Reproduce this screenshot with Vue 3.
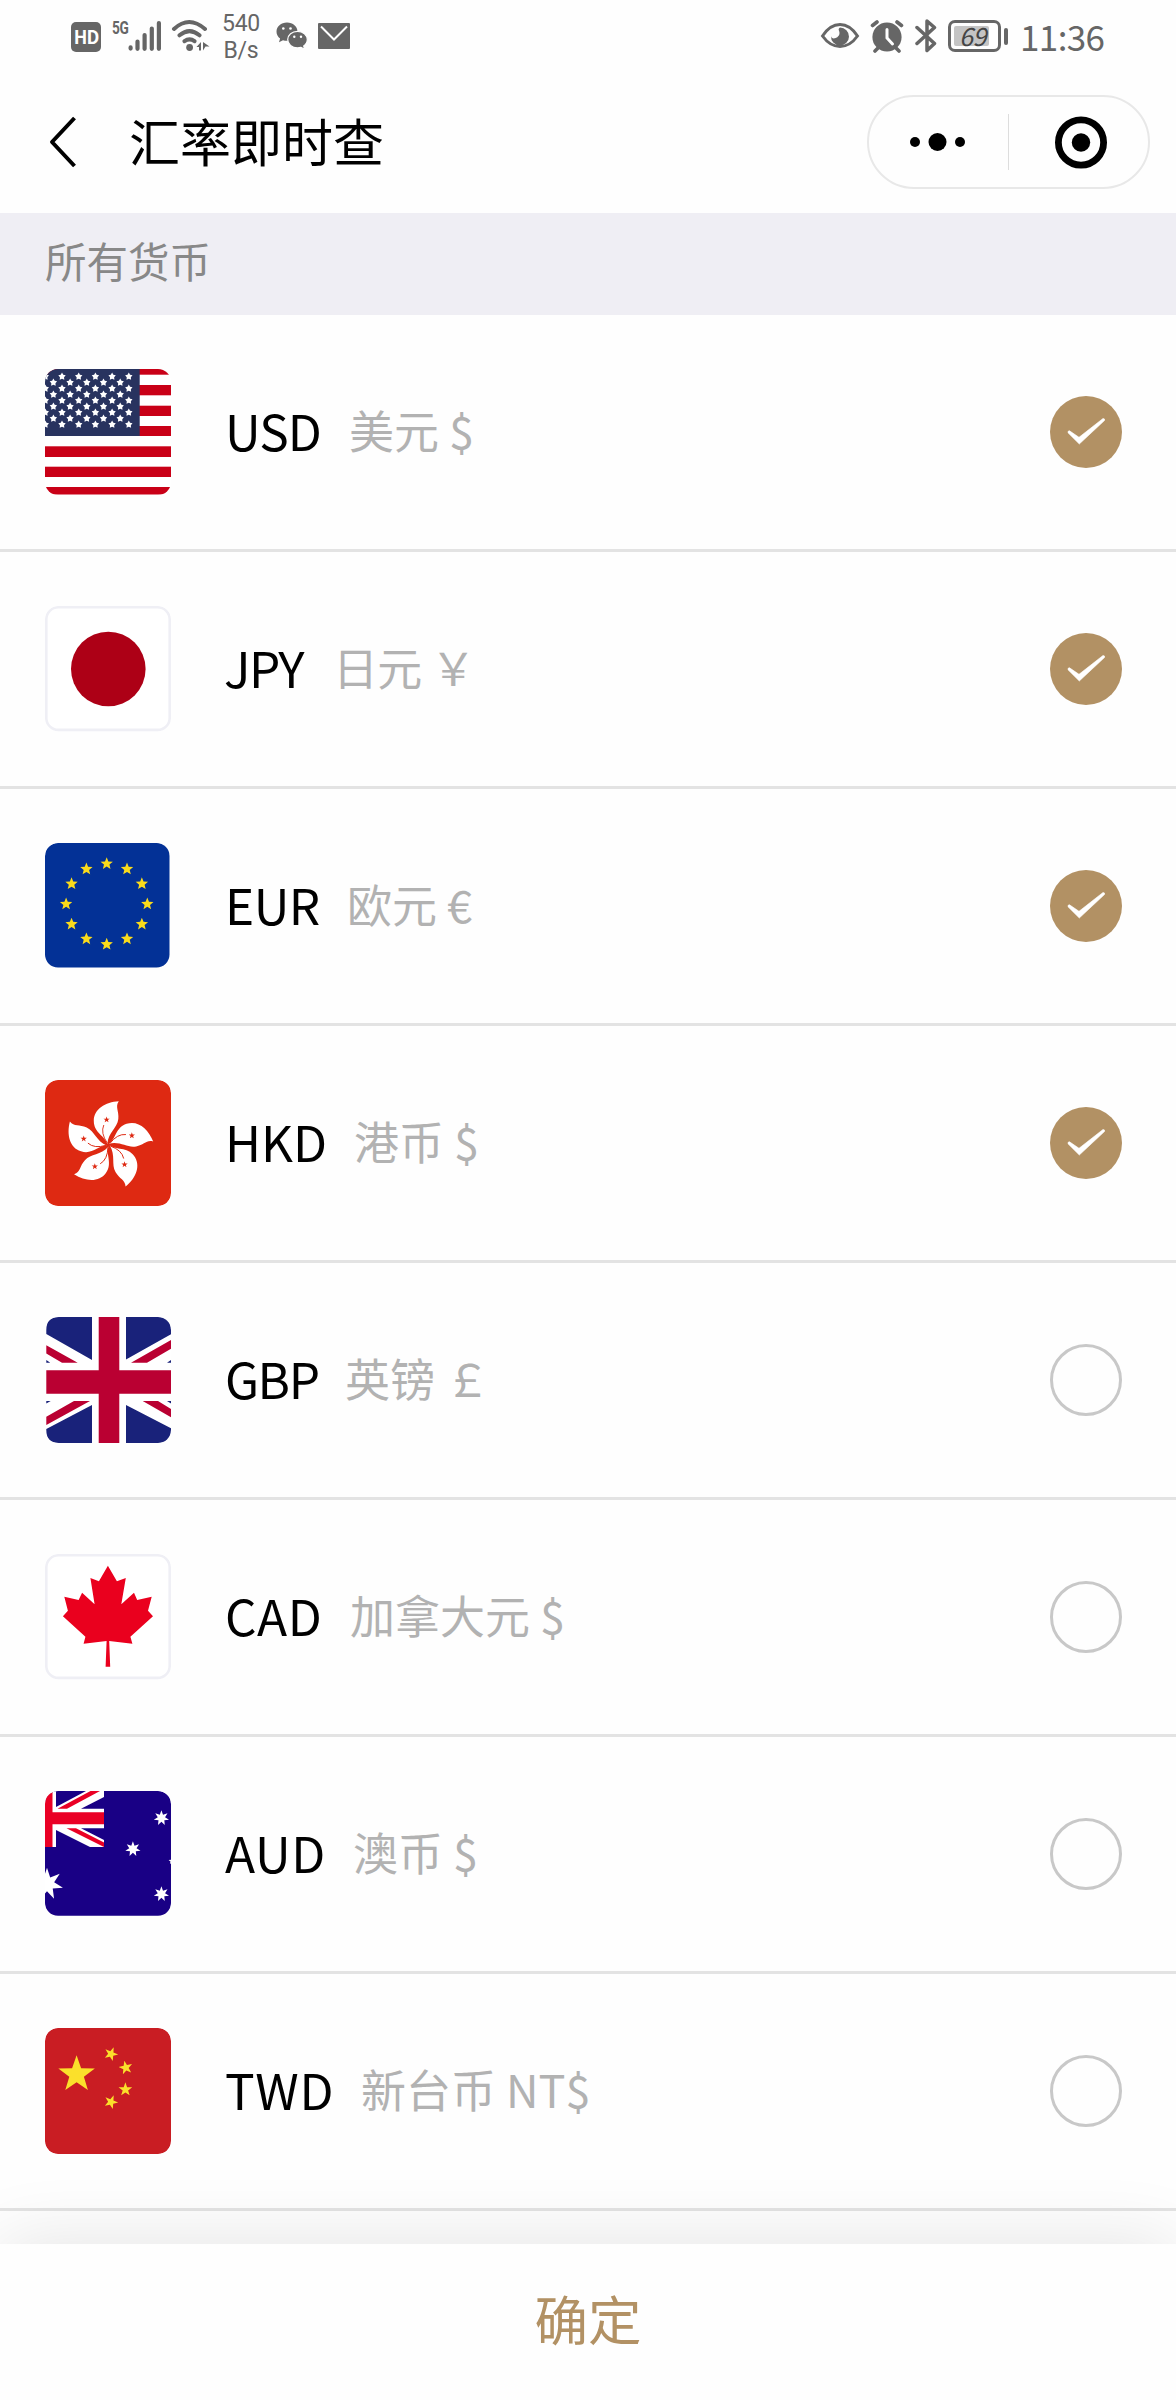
<script setup>
import { ref } from 'vue'

const currencies = ref([
  { code: 'USD', label: '美元 $', checked: true },
  { code: 'JPY', label: '日元 ￥', checked: true },
  { code: 'EUR', label: '欧元 €', checked: true },
  { code: 'HKD', label: '港币 $', checked: true },
  { code: 'GBP', label: '英镑 ￡', checked: false },
  { code: 'CAD', label: '加拿大元 $', checked: false },
  { code: 'AUD', label: '澳币 $', checked: false },
  { code: 'TWD', label: '新台币 NT$', checked: false },
])

// Builds the points of a regular star polygon.
function star(cx, cy, r, n = 5, inner = 0.4, turn = 0) {
  const pts = []
  for (let i = 0; i < n * 2; i++) {
    const a = ((-90 + turn + (i * 180) / n) * Math.PI) / 180
    const d = i % 2 ? r * inner : r
    pts.push((cx + d * Math.cos(a)).toFixed(2) + ',' + (cy + d * Math.sin(a)).toFixed(2))
  }
  return pts.join(' ')
}

const usStripes = [[0, 5.7], [16, 10.3], [36.7, 10.3], [57, 10], [77.3, 10.7], [97.7, 10.3], [118, 7.5]]
const usStars = []
for (let r = 0; r < 9; r++) {
  const first = r % 2 ? 8.4 : 0.3
  const count = r % 2 ? 5 : 6
  for (let c = 0; c < count; c++) usStars.push(star(first + c * 16.7, 7.5 + r * 6, 3.9, 5, 0.55))
}
const euStars = Array.from({ length: 12 }, (_, i) => {
  const a = (i * Math.PI) / 6
  return star(61.7 + 40.6 * Math.sin(a), 61 - 40.3 * Math.cos(a), 6.5, 5, 0.44)
})
const auStars = [
  star(116.4, 27, 7.8, 7, 0.48),
  star(87.9, 58, 7.8, 7, 0.48),
  star(116.4, 103, 7.8, 7, 0.48),
  star(127, 70, 3.6, 5, 0.45),
  star(2, 93, 16.3, 7, 0.45),
]
const cnStars = [
  star(31.6, 46.5, 19.2),
  star(66, 26, 7.2, 5, 0.4, 22),
  star(80.8, 39.7, 7.2, 5, 0.4, -12),
  star(80.4, 61.5, 7.2, 5, 0.4, 0),
  star(66, 74, 7.2, 5, 0.4, 22),
]
</script>

<template>
  <div class="screen">
    <div class="status">
      <div class="hd">HD</div>
      <div class="cell">
        <span class="gen">5G</span>
        <svg class="bars" width="34" height="32" viewBox="0 0 34 32">
          <g stroke="#666" stroke-width="4.2" stroke-linecap="round">
            <path d="M2.6 27.4v1.2M9.5 21.5v7.3M16.6 15v13.8M23.8 8.5v20.3M30.9 3v25.8" />
          </g>
        </svg>
      </div>
      <svg class="wifi" width="40" height="34" viewBox="0 0 40 34">
        <g fill="none" stroke="#666" stroke-width="4" stroke-linecap="round">
          <path d="M3 10Q18 -4 34 10M8.5 16.3Q18.500 8 28.500 16.300M13.500 22.200Q18.500 18.500 23.500 22.200" />
        </g>
        <circle cx="18.600" cy="28.500" r="3.400" fill="#666" />
        <path d="M25.500 28L30 23v8.500h-2v-3.500zM32 23l6.500 4.500h-4l-2.500 4z" fill="#666" />
      </svg>
      <div class="speed"><span>540</span><span>B/s</span></div>
      <svg class="wechat" width="32" height="28" viewBox="0 0 32 28">
        <path d="M11 .5C5 .5.500 4.500.500 9.700c0 2.800 1.400 5.200 3.600 6.900L3 20.300l4-2.100c1.200.4 2.600.6 4 .6C17 18.800 21.500 14.800 21.500 9.700S17 .5 11 .5z" fill="#666" />
        <path d="M21.500 9.300c-5.500 0-9.800 3.700-9.800 8.300s4.300 8.300 9.800 8.300c1.200 0 2.400-.2 3.500-.5l3.700 2-1-3.400c2.200-1.500 3.600-3.800 3.600-6.400 0-4.600-4.300-8.300-9.800-8.300z" fill="#666" stroke="#fff" stroke-width="1.200" />
        <g fill="#fff"><circle cx="7.300" cy="6.500" r="1.300" /><circle cx="14.500" cy="6.500" r="1.300" /><circle cx="18.300" cy="14.800" r="1.200" /><circle cx="25" cy="14.800" r="1.200" /></g>
      </svg>
      <svg class="mail" width="32" height="26" viewBox="0 0 32 26">
        <rect width="32" height="26" rx="1" fill="#666" />
        <path d="M3 3.500L16 16.500L29 3.500" fill="none" stroke="#fff" stroke-width="2" />
      </svg>
      <svg class="eye" width="40" height="28" viewBox="0 0 40 28">
        <path d="M2.500 14Q10 2.500 20 2.500T37.500 14Q30 24.500 20 24.500T2.500 14z" fill="none" stroke="#666" stroke-width="3" />
        <path d="M20 5.500a9 9 0 1 1-9 8.500c.3 2 2 2.800 4 2.300 3.500-1 5.500-4 4-7.500-.6-1.500-.5-2.500 1-3.300z" fill="#666" />
      </svg>
      <svg class="alarm" width="34" height="34" viewBox="0 0 34 34">
        <circle cx="17" cy="18" r="14.600" fill="#666" />
        <path d="M2.500 6.500L7 3M31.500 6.500L27 3M5 32l4-4M29 32l-4-4" stroke="#666" stroke-width="3.600" stroke-linecap="round" />
        <path d="M17 10.500v8.500l5.500 6" fill="none" stroke="#fff" stroke-width="3" stroke-linecap="round" />
      </svg>
      <svg class="bt" width="22" height="36" viewBox="0 0 22 36">
        <path d="M2 9.500L19.500 25.500L12 32.500V3L19.500 9.500L2 25.500" fill="none" stroke="#666" stroke-width="3.500" stroke-linejoin="round" stroke-linecap="round" />
      </svg>
      <div class="battery"><span>69</span></div>
      <div class="nub"></div>
      <div class="time">11:36</div>
    </div>

    <header class="nav">
      <svg class="back" width="30" height="54" viewBox="0 0 30 54">
        <path d="M26.500 3L4 27L26.500 51" fill="none" stroke="#000" stroke-width="4" stroke-linejoin="round" />
      </svg>
      <h1>汇率即时查</h1>
      <div class="capsule">
        <svg width="139" height="90" viewBox="0 0 139 90">
          <circle cx="46" cy="45" r="5" /><circle cx="68.500" cy="45" r="9" /><circle cx="91" cy="45" r="5" />
        </svg>
        <i></i>
        <svg width="139" height="90" viewBox="0 0 139 90">
          <circle cx="72" cy="45.500" r="22.600" fill="none" stroke="#000" stroke-width="6.800" /><circle cx="72" cy="45.500" r="9.200" />
        </svg>
      </div>
    </header>

    <div class="section">所有货币</div>

    <main>
      <div v-for="c in currencies" :key="c.code" class="row" :class="c.code.toLowerCase()">
        <div class="flag">
          <svg width="126" height="126" viewBox="0 0 126 126">
            <g v-if="c.code === 'USD'">
              <rect width="126" height="126" fill="#fff" />
              <rect v-for="s in usStripes" :key="s[0]" x="0" :y="s[0]" width="126" :height="s[1]" fill="#c90017" />
              <rect width="94.700" height="67" fill="#28335f" />
              <polygon v-for="(p, i) in usStars" :key="i" :points="p" fill="#fff" />
            </g>
            <g v-else-if="c.code === 'JPY'">
              <rect x="1.300" y="1.300" width="123.400" height="122.600" rx="12" fill="#fff" stroke="#efeff5" stroke-width="2.600" />
              <circle cx="63.300" cy="63" r="37.300" fill="#ad0016" />
            </g>
            <g v-else-if="c.code === 'EUR'">
              <rect width="124.500" height="124.500" rx="13" fill="#033196" />
              <polygon v-for="(p, i) in euStars" :key="i" :points="p" fill="#fadb1b" />
            </g>
            <g v-else-if="c.code === 'HKD'">
              <rect width="126" height="126" rx="13" fill="#de2912" />
              <g transform="translate(63.300 65)">
                <g v-for="n in 5" :key="n" :transform="`rotate(${(n - 1) * 72})`">
                  <path d="M-1 -1C-3 -9 -14.500 -12 -14.500 -24C-14.500 -36 -3 -43 10.500 -43.800C6.500 -38 11 -34 10 -26C9 -17 0 -13 -1 -1z" fill="#fff" />
                  <polygon :points="star(-1.700, -25.300, 3.300)" fill="#de2912" />
                  <path d="M-1 -2Q-8 -12 -4.500 -20" fill="none" stroke="#de2912" stroke-width=".9" />
                </g>
              </g>
            </g>
            <g v-else-if="c.code === 'GBP'">
              <rect x="1.300" width="124.700" height="126" rx="13" fill="#fff" />
              <path d="M1.300 17V13Q1.300 0 14 0H47V43zM81 0H113Q126 0 126 13V17.300L81 42.500zM1.300 112L47 88V126H14Q1.300 126 1.300 113zM81 88L126 111.300V113Q126 126 113 126H81zM1.300 43l4 2.700h-4zM126 43l-4 2.700h4zM1.300 84h4.400l-4.400 2.500zM122 84h4v2.500z" fill="#19227a" />
              <path d="M53.700 0H74.300V53.300H126V76.700H74.300V126H53.700V76.700H1.300V53.300H53.700zM1.300 28.300L32.700 45.700H17L1.300 36.500zM126 23V31.700L102 45.700H86zM1.300 99.700L29 84H45L1.300 108zM97.700 84H113L126 92V100.300z" fill="#ba0032" />
            </g>
            <g v-else-if="c.code === 'CAD'">
              <rect x="1.300" y="1.300" width="123.400" height="122.600" rx="12" fill="#fff" stroke="#efeff5" stroke-width="2.600" />
              <path d="M62.900 11.700L71.900 27.300L80.800 24L76.300 50.300L89 38.700L92.200 46L106.700 42.700L103 56.700L108 62.300L85.400 82.700L87.400 89.700L64.200 87L65.200 112.700H60.600L61.600 87L38.600 89.700L40.400 82.700L17.900 62.300L22.900 56.700L19.300 42.700L33.600 46L37.100 38.700L49.600 50.300L45.400 24L53.900 27.300z" fill="#ea001e" />
            </g>
            <g v-else-if="c.code === 'AUD'">
              <rect width="126" height="124.700" rx="13" fill="#190085" />
              <path d="M3 4Q6 1 11 0V16L41 0H59V6L36 17.700H59V37.300H36L59 49V56H45L11 39V56H0V12Q0 7 3 4z" fill="#fff" />
              <path d="M2 5Q4 2 7.500 1V21.300H59V33.300H7.500V56H0V12Q0 8 2 5zM12.500 17.700L45.500 0H55L22 17.700zM21.500 37.300H31L59 51.500V56z" fill="#ea0025" />
              <polygon v-for="(p, i) in auStars" :key="i" :points="p" fill="#fff" />
            </g>
            <g v-else>
              <rect width="126" height="126" rx="13" fill="#c91d23" />
              <polygon v-for="(p, i) in cnStars" :key="i" :points="p" fill="#fbe02b" />
            </g>
          </svg>
        </div>
        <span class="code">{{ c.code }}</span>
        <span class="label">{{ c.label }}</span>
        <div class="check" :class="{ on: c.checked }" @click="c.checked = !c.checked">
          <svg v-if="c.checked" width="72" height="72" viewBox="0 0 72 72">
            <path d="M19.500 34.800L29 41.300L53 22.500Q55.200 22.500 54.500 24.500L29.300 48L18 36.800Q17.600 34.600 19.500 34.800z" fill="#fff" stroke="#fff" stroke-width=".6" stroke-linejoin="round" />
          </svg>
        </div>
      </div>
    </main>

    <footer class="confirm">确定</footer>
  </div>
</template>

<style>
body { margin: 0; background: #fff; }
</style>

<style scoped>
.screen {
  width: 1176px;
  height: 2400px;
  display: flex;
  flex-direction: column;
  overflow: hidden;
  background: #fefefe;
  color: #000;
  font-family: "Noto Sans CJK SC", sans-serif;
}
.status {
  height: 72px;
  flex: none;
  display: flex;
  align-items: center;
  padding-left: 71px;
  color: #666;
}
.status svg { flex: none; display: block; }
.hd {
  width: 30px; height: 30px; margin-top: 2px; border-radius: 5px;
  background: #666; color: #fff;
  font: 700 18px/28px "Noto Sans CJK SC", sans-serif;
  text-align: center; letter-spacing: -1px;
}
.cell { display: flex; align-items: flex-start; margin-left: 11px; height: 32px; width: 50px; }
.gen { font: 700 19px/15px "Roboto", sans-serif; width: 16px; transform: scaleX(.72); transform-origin: left; letter-spacing: -.5px; }
.wifi { margin-left: 9px; }
.speed {
  width: 42px; margin-left: 9px; padding-top: 2px;
  display: flex; flex-direction: column; align-items: center;
  font: 23px/27px "Roboto", sans-serif; letter-spacing: -.3px;
}
.wechat { margin-left: 14px; }
.mail { margin-left: 10px; }
.eye { margin-left: 470px; }
.alarm { margin-left: 10px; }
.bt { margin-left: 11px; }
.battery {
  box-sizing: border-box; width: 53px; height: 32px; margin-left: 11px;
  border: 3px solid #666; border-radius: 7px; padding: 3px;
}
.battery span {
  display: block; width: 35px; height: 20px; border-radius: 2px; background: #c4c4c4;
  color: #444; font: italic 25px/18px "Noto Sans CJK SC", sans-serif; text-indent: 5px; letter-spacing: -.5px; white-space: nowrap;
}
.nub { width: 4px; height: 17px; border-radius: 2px; margin-left: 3px; background: #666; }
.time { margin-left: 12px; font-size: 35px; line-height: 40px; letter-spacing: -.6px; }
.nav { box-sizing: border-box; height: 141px; flex: none; display: flex; align-items: center; padding: 0 26px 1px 48px; }
.back { flex: none; }
h1 { margin: 0 0 4px 51px; font-size: 51px; line-height: 60px; font-weight: 400; }
.capsule {
  box-sizing: border-box; width: 283px; height: 94px; margin-left: auto;
  border: 2px solid #e8e8e8; border-radius: 47px;
  display: flex; align-items: center;
}
.capsule i { width: 1px; height: 56px; background: #ddd; }
.section {
  height: 102px; flex: none; padding-left: 45px; background: #efeef4;
  color: #888; font-size: 41.500px; line-height: 95px;
}
main { flex: none; }
.row {
  box-sizing: border-box; height: 237px; border-bottom: 3px solid #e3e3e3;
  display: flex; align-items: center; padding: 0 54px 0 45px;
}
.flag { width: 126px; height: 126px; border-radius: 13px; overflow: hidden; }
.flag svg, .check svg { display: block; }
.code { margin: 0 0 5px 54px; width: 124px; font-size: 49.500px; line-height: 70px; white-space: nowrap; }
.label { margin-bottom: 4px; color: #b2b2b2; font-size: 45px; line-height: 70px; white-space: pre; }
.usd .code { letter-spacing: -1px; }
.jpy .code { margin-left: 53px; width: 109px; letter-spacing: -1.500px; }
.eur .code { width: 122px; letter-spacing: -.5px; }
.hkd .code { width: 129px; }
.gbp .code { width: 120px; letter-spacing: -1.500px; }
.cad .code { width: 125px; letter-spacing: .5px; }
.aud .code { width: 128px; letter-spacing: .7px; }
.twd .code { width: 136px; letter-spacing: .7px; }
.jpy .label { letter-spacing: -.8px; }
.check { box-sizing: border-box; width: 72px; height: 72px; border-radius: 50%; border: 3px solid #c8c8c8; margin-left: auto; }
.check.on { border: 0; background: #b29164; }
.confirm {
  position: absolute; left: 0; top: 2244px; width: 1176px; height: 156px;
  background: #fefefe; color: #b29164; text-align: center;
  font-size: 53.500px; line-height: 148px;
  box-shadow: 0 0 75px rgba(0, 0, 0, .11);
}
</style>
